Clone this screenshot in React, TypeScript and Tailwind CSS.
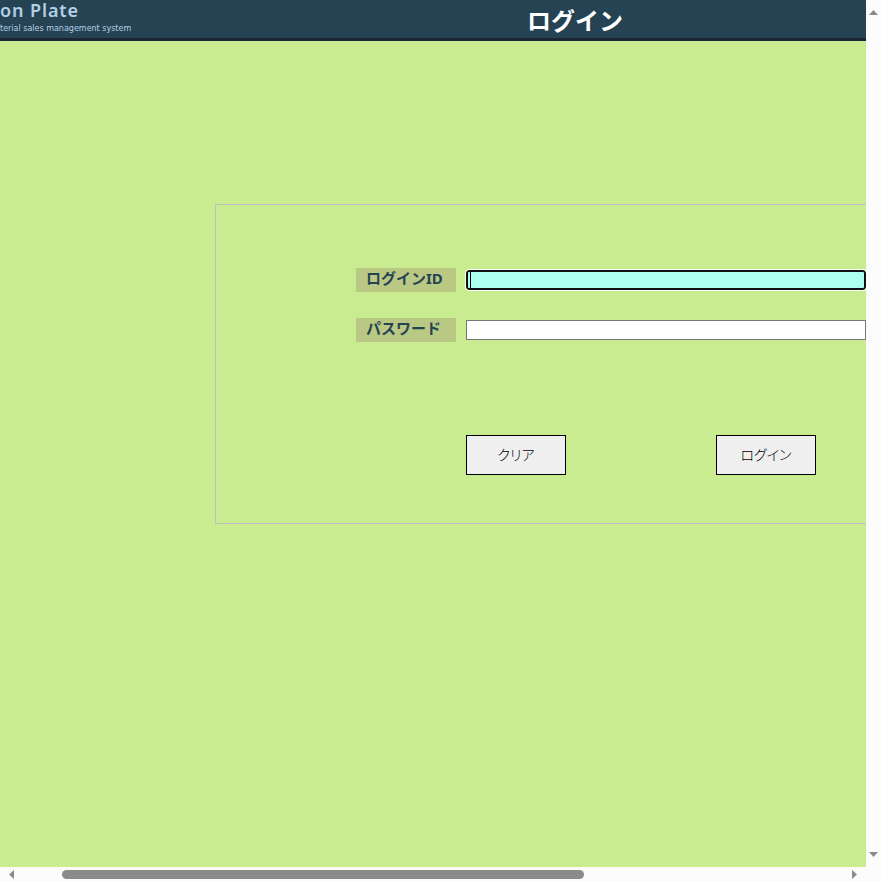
import React from "react";

const uiFont = "font-['Noto_Sans','Noto_Sans_CJK_JP',sans-serif]";
const jpFont = "font-['Noto_Sans_CJK_JP',sans-serif]";

function Header() {
  return (
    <header className="grid h-[41px] shrink-0 grid-cols-[1fr_339px] border-b-3 border-[#1a2433] bg-[#264353]">
      <div className={`whitespace-nowrap text-[#b3cfe5] ${uiFont}`}>
        <div className="text-lg leading-[21px] font-semibold tracking-wider">on Plate</div>
        <div className="font-['DejaVu_Sans',sans-serif] text-[8px] leading-[16px]">terial sales management system</div>
      </div>
      <h1 className={`text-2xl leading-[40px] font-bold text-white ${jpFont}`}>ログイン</h1>
    </header>
  );
}

function FieldLabel({ id, children }: { id: string; children: React.ReactNode }) {
  return (
    <label
      htmlFor={id}
      className={`h-6 w-[100px] shrink-0 bg-[#b9c984] pl-[10px] text-[15px] leading-[20px] font-bold whitespace-nowrap text-[#264353] ${uiFont}`}
    >
      {children}
    </label>
  );
}

function FormButton({ type, children }: { type: "reset" | "submit"; children: React.ReactNode }) {
  return (
    <button
      type={type}
      className={`h-10 w-[100px] shrink-0 border border-black bg-[#efefef] pb-[2px] text-sm font-light whitespace-nowrap text-black [font-feature-settings:'palt'] ${jpFont}`}
    >
      {children}
    </button>
  );
}

function LoginForm() {
  return (
    <form
      className="mt-[163px] ml-[215px] flex h-80 flex-col border-y border-l border-[#c0c0c0] pt-[63px] pl-[140px]"
      onSubmit={(e) => e.preventDefault()}
    >
      <div className="flex gap-[10px]">
        <FieldLabel id="login-id">ログインID</FieldLabel>
        <div className="relative mt-[2px] h-5 min-w-0 flex-1">
          <input
            id="login-id"
            type="text"
            className="block h-5 w-full rounded-[3px] border-2 border-[#101010] bg-[#aafff0] px-1 text-sm caret-transparent outline-1 outline-white"
          />
          <span className="absolute top-[2px] left-1 h-4 w-px bg-black" />
        </div>
      </div>
      <div className="mt-[26px] flex gap-[10px]">
        <FieldLabel id="password">パスワード</FieldLabel>
        <input
          id="password"
          type="password"
          className="mt-[2px] block h-5 min-w-0 flex-1 border border-[#767676] bg-white px-1 text-sm"
        />
      </div>
      <div className="mt-[93px] flex gap-[150px] pl-[110px]">
        <FormButton type="reset">クリア</FormButton>
        <FormButton type="submit">ログイン</FormButton>
      </div>
    </form>
  );
}

function VerticalBar() {
  return (
    <div className="flex flex-col items-center justify-between bg-[#fcfcfc] pt-[10px] pb-[10px]">
      <svg width="9" height="5" viewBox="0 0 9 5" fill="#8b8b8b">
        <path d="M4.5 0L9 5H0Z" />
      </svg>
      <svg width="9" height="5" viewBox="0 0 9 5" fill="#8b8b8b">
        <path d="M0 0H9L4.5 5Z" />
      </svg>
    </div>
  );
}

function HorizontalBar() {
  return (
    <div className="flex items-center bg-[#fcfcfc] pr-[9px] pl-[9px]">
      <svg width="5" height="9" viewBox="0 0 5 9" fill="#8b8b8b">
        <path d="M5 0V9L0 4.5Z" />
      </svg>
      <div className="mr-12 ml-12 flex-1">
        <div className="h-[9px] w-[70.4%] rounded-full bg-[#8b8b8b]" />
      </div>
      <svg width="5" height="9" viewBox="0 0 5 9" fill="#8b8b8b">
        <path d="M0 0V9L5 4.5Z" />
      </svg>
    </div>
  );
}

export default function App() {
  return (
    <div className="grid h-screen grid-cols-[minmax(0,1fr)_15px] grid-rows-[minmax(0,1fr)_15px] bg-[#fcfcfc]">
      <div className="flex flex-col bg-[#c9ec91]">
        <Header />
        <main>
          <LoginForm />
        </main>
      </div>
      <VerticalBar />
      <HorizontalBar />
    </div>
  );
}
